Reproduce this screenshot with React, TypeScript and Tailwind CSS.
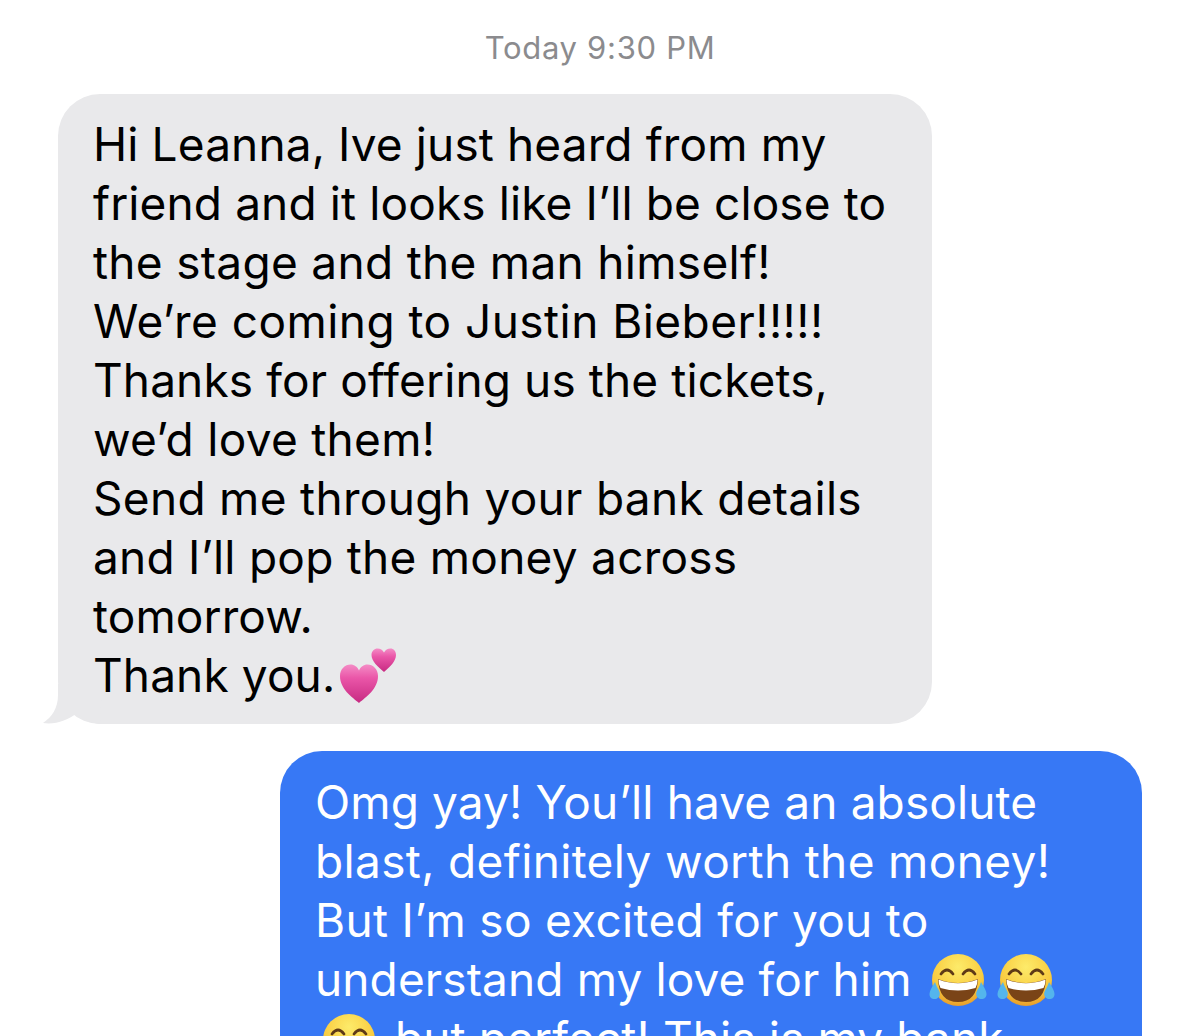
import React from "react";

function Hearts() {
  return (
    <svg width="58" height="56" viewBox="0 0 58 56" className="absolute left-[247px] top-[2px]" aria-hidden="true">
      <defs>
        <linearGradient id="h" x1="0" y1="0" x2="0" y2="1">
          <stop offset="0" stopColor="#f48cc6" />
          <stop offset="0.35" stopColor="#ea56a8" />
          <stop offset="1" stopColor="#c72a82" />
        </linearGradient>
      </defs>
      <path d="M44 24 C38 19 31.500 13 31.500 7 C31.500 3 34.500 0.500 37.500 0.500 C40.500 0.500 42.500 2 44 4.500 C45.500 2 47.500 0.500 50.500 0.500 C53.500 0.500 56 3 56 7 C56 13 50 19 44 24 Z" fill="url(#h)" />
      <path d="M19 55 C12 49 0 41 0 28 C0 21 5 16.500 10.500 16.500 C14.500 16.500 17.500 19 19 22.500 C20.500 19 23.500 16.500 27.500 16.500 C33 16.500 38 21 38 28 C38 41 26 49 19 55 Z" fill="url(#h)" />
    </svg>
  );
}

function Laugh({ className }: { className: string }) {
  return (
    <svg viewBox="0 0 58 54" className={className} aria-hidden="true">
      <defs>
        <radialGradient id="f" cx="0.5" cy="0.25" r="0.85">
          <stop offset="0" stopColor="#fdeb6a" />
          <stop offset="0.6" stopColor="#f9cb3f" />
          <stop offset="1" stopColor="#e08a22" />
        </radialGradient>
      </defs>
      <circle cx="29" cy="27" r="26" fill="url(#f)" />
      <path d="M12 21 Q18 13 24 21 M34 21 Q40 13 46 21" stroke="#5f3a17" strokeWidth="2.8" fill="none" strokeLinecap="round" />
      <path d="M9 26 Q29 34 49 26 Q48 49 29 49 Q10 49 9 26 Z" fill="#7a4417" />
      <path d="M9.500 26.500 Q29 34 48.500 26.500 Q48.500 32 46.500 35 Q29 40 11.500 35 Q9.500 32 9.500 26.500 Z" fill="#fff" />
      <path d="M6 29 C3 34 0.500 38 0.500 41 C0.500 45 3.500 46.500 6.500 46 C10 45.500 11.500 42 10.500 39 C9.500 36 7 33 6 29 Z" fill="#54b5ec" />
      <path d="M52 29 C55 34 57.500 38 57.500 41 C57.500 45 54.500 46.500 51.500 46 C48 45.500 46.500 42 47.500 39 C48.500 36 51 33 52 29 Z" fill="#54b5ec" />
    </svg>
  );
}

export default function App() {
  return (
    <div className="h-[1036px] w-[1200px] overflow-hidden bg-white text-[46px] leading-[59px] tracking-[0.12px] [font-family:Inter,'Liberation_Sans',sans-serif]">
      <div className="flex h-[94px] items-center justify-center text-[31px] tracking-[0.7px] text-[#8b8b8e]">
        Today 9:30 PM
      </div>
      <div className="relative ml-[58px] h-[630px] w-[874px] rounded-[42px] bg-[#e9e9eb] pl-[35px] pr-[20px] pt-[21px] text-black">
        <svg width="60" height="40" viewBox="0 0 60 40" className="absolute bottom-0 left-[-16px]" aria-hidden="true">
          <path d="M16 0 L16 11 C16 24 10 33 1 39 C13 41 26 36 35 29 C40 34 48 39 58 40 L60 0 Z" fill="#e9e9eb" />
        </svg>
        <div className="relative">
          <div>Hi Leanna, Ive just heard from my</div>
          <div>friend and it looks like I’ll be close to</div>
          <div className="tracking-[0.3px]">the stage and the man himself!</div>
          <div className="tracking-[0.45px]">We’re coming to Justin Bieber!!!!!</div>
          <div>Thanks for offering us the tickets,</div>
          <div className="tracking-[0.3px]">we’d love them!</div>
          <div className="tracking-[0.3px]">Send me through your bank details</div>
          <div className="tracking-[0.25px]">and I’ll pop the money across</div>
          <div>tomorrow.</div>
          <div className="relative">
            Thank you.
            <Hearts />
          </div>
        </div>
      </div>
      <div className="mt-[27px] ml-[280px] h-[400px] w-[862px] rounded-[42px] bg-[#3778f5] pl-[35px] pr-[20px] pt-[22px] text-white">
        <div>Omg yay! You’ll have an absolute</div>
        <div className="tracking-[0.35px]">blast, definitely worth the money!</div>
        <div className="tracking-[0.3px]">But I’m so excited for you to</div>
        <div className="flex items-center">
          understand my love for him
          <Laugh className="ml-[17px] h-[54px] w-[58px]" />
          <Laugh className="ml-[10px] h-[54px] w-[58px]" />
        </div>
        <div className="flex items-center">
          <Laugh className="ml-[5px] mt-[3px] h-[54px] w-[58px]" />
          <span className="ml-[17px]">but perfect! This is my bank</span>
        </div>
      </div>
    </div>
  );
}
